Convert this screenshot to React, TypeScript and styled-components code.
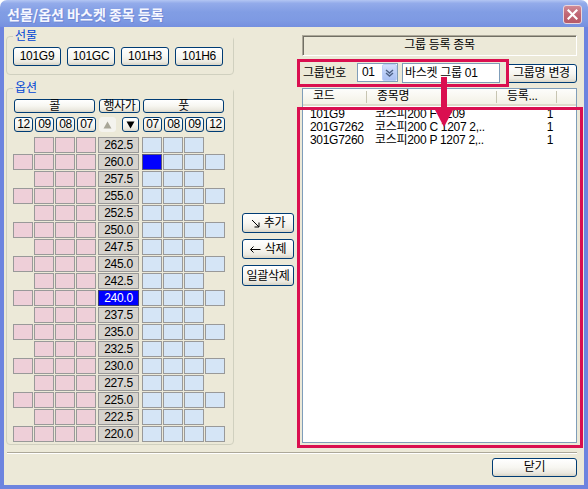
import React from "react";
import styled, { createGlobalStyle, css } from "styled-components";

const Global = createGlobalStyle`
  html, body { margin: 0; padding: 0; background: #ffffff; }
  body {
    font-family: "Liberation Sans", "Noto Sans CJK KR", sans-serif;
    font-size: 12px;
    letter-spacing: -0.3px;
    color: #000;
  }
  * { box-sizing: border-box; }
`;

const RED = "#da0f50";

const Window = styled.div`
  width: 588px;
  height: 489px;
  display: flex;
  flex-direction: column;
`;

const TitleBar = styled.div`
  height: 27px;
  flex: none;
  border-radius: 7px 7px 0 0;
  background: linear-gradient(
    180deg,
    #b3c6f3 0%,
    #93abea 12%,
    #819de4 45%,
    #7e9ae3 75%,
    #7590df 100%
  );
  display: flex;
  align-items: center;
  justify-content: space-between;
  padding: 0 6px 0 7px;
`;

const TitleText = styled.span`
  font-family: "Noto Sans CJK KR", sans-serif;
  font-weight: 700;
  font-size: 14px;
  letter-spacing: 0;
  color: #f6f7ff;
  text-shadow: 1px 1px 0 #7088d4;
  line-height: 18px;
`;

const CloseBox = styled.div`
  width: 19px;
  height: 19px;
  margin-top: 1px;
  border: 1px solid #e9d6dc;
  border-radius: 3px;
  background: linear-gradient(180deg, #d08a96 0%, #c06673 50%, #b65a68 100%);
  display: flex;
  align-items: center;
  justify-content: center;
`;

const Frame = styled.div`
  flex: 1;
  display: flex;
  border-style: solid;
  border-color: #6d84df;
  border-width: 0 4px 4px 4px;
`;

const Client = styled.div`
  flex: 1;
  position: relative;
  background: #ece9d8;
  display: flex;
  flex-direction: column;
`;

const Main = styled.div`
  height: 423px;
  display: flex;
  padding-left: 2px;
`;

const LeftColumn = styled.div`
  width: 228px;
  padding-top: 2px;
  display: flex;
  flex-direction: column;
`;

const GroupBox = styled.div<{ $height: number; $gap: number }>`
  margin-top: ${(p) => p.$gap}px;
  height: ${(p) => p.$height}px;
  border: 1px solid #d0d0bf;
  border-radius: 4px;
  display: flex;
  flex-direction: column;
`;

const GroupLegend = styled.div`
  display: table;
  margin: -8px 0 0 6px;
  padding: 0 2px;
  background: #ece9d8;
  color: #0046d5;
  line-height: 14px;
  height: 14px;
  letter-spacing: 0;
`;

const xpButton = css`
  border: 1px solid #003c74;
  border-radius: 3px;
  background: linear-gradient(
    180deg,
    #ffffff 0%,
    #f7f6f1 50%,
    #ebe9e0 82%,
    #d8d4c6 100%
  );
  color: #000;
  font-family: inherit;
  font-size: 12px;
  letter-spacing: inherit;
  padding: 0;
  margin: 0;
  text-align: center;
  white-space: nowrap;
  cursor: default;
`;

const FutureRow = styled.div`
  display: flex;
  gap: 6px;
  padding: 4px 0 0 6px;
`;

const FutureButton = styled.button`
  ${xpButton};
  width: 48px;
  height: 19px;
  line-height: 17px;
`;

const OptionArea = styled.div`
  padding: 4px 0 0 6px;
`;

const optionColumns = css`
  display: grid;
  grid-template-columns: repeat(4, 20px) 44px repeat(4, 20px);
  column-gap: 1px;
`;

const HeaderRow = styled.div`
  ${optionColumns};
  height: 14px;
  margin-bottom: 4px;
`;

const SideHeader = styled.button<{ $side: "call" | "put" }>`
  ${xpButton};
  grid-column: ${(p) => (p.$side === "call" ? "1 / 5" : "6 / 10")};
  margin: 0 1px;
  height: 14px;
  line-height: 12px;
`;

const StrikeHeader = styled.button`
  ${xpButton};
  grid-column: 5;
  margin: 0 1px 0 2px;
  height: 14px;
  line-height: 12px;
`;

const MonthRow = styled.div`
  ${optionColumns};
  height: 15px;
  margin-bottom: 5px;
`;

const MonthButton = styled.button`
  ${xpButton};
  margin-left: 1px;
  height: 15px;
  line-height: 13px;
`;

const ArrowPair = styled.div`
  display: flex;
  justify-content: space-between;
  padding: 0 2px;
`;

const ScrollArrow = styled.button<{ $disabled?: boolean }>`
  ${xpButton};
  width: 17px;
  height: 15px;
  display: flex;
  align-items: center;
  justify-content: center;
  ${(p) =>
    p.$disabled &&
    css`
      border-color: #f4f3ee;
      background: #f4f3ee;
    `}
`;

const StrikeGrid = styled.div`
  ${optionColumns};
  grid-auto-rows: 16px;
  row-gap: 1px;
`;

const OptionCell = styled.div<{ $side: "call" | "put"; $picked?: boolean }>`
  border: 1px solid #999999;
  background: ${(p) =>
    p.$picked ? "#0000ff" : p.$side === "call" ? "#eecfd8" : "#d5e5f6"};
  ${(p) => p.$picked && "border-color: #5a5a7a;"}
`;

const EmptyCell = styled.div``;

const StrikeCell = styled.div<{ $active?: boolean }>`
  margin: 0 2px 0 1px;
  border: 1px solid ${(p) => (p.$active ? "#3a3a6a" : "#999999")};
  background: ${(p) => (p.$active ? "#0000ff" : "#d6d3ce")};
  color: ${(p) => (p.$active ? "#ffffff" : "#000000")};
  text-align: center;
  line-height: 14px;
`;

const MiddleColumn = styled.div`
  width: 52px;
  margin-left: 8px;
  padding-top: 186px;
  display: flex;
  flex-direction: column;
  gap: 6px;
`;

const ActionButton = styled.button<{ $tall?: boolean }>`
  ${xpButton};
  width: 52px;
  height: ${(p) => (p.$tall ? 21 : 20)}px;
  line-height: 18px;
  display: flex;
  align-items: center;
  justify-content: center;
  gap: 4px;
`;

const RightColumn = styled.div`
  width: 275px;
  margin-left: 8px;
  display: flex;
  flex-direction: column;
`;

const SectionTitle = styled.div`
  margin-top: 8px;
  height: 21px;
  border-style: solid;
  border-width: 1px;
  border-color: #aca899 #ffffff #ffffff #aca899;
  box-shadow: inset 1px 1px 0 #716f64;
  text-align: center;
  line-height: 19px;
`;

const GroupRow = styled.div`
  margin-top: 7px;
  height: 20px;
  display: flex;
  align-items: flex-start;
`;

const GroupLabel = styled.span`
  width: 55px;
  padding-left: 1px;
  line-height: 20px;
`;

const ComboBox = styled.div`
  width: 41px;
  height: 19px;
  border: 1px solid #7f9db9;
  background: #ffffff;
  display: flex;
  align-items: center;
  justify-content: space-between;
  padding-left: 4px;
  line-height: 17px;
`;

const ComboDrop = styled.span`
  width: 15px;
  height: 17px;
  border: 1px solid #bccff7;
  border-radius: 2px;
  background: linear-gradient(180deg, #d2dffc 0%, #b7cbf6 60%, #aac0f2 100%);
  display: flex;
  align-items: center;
  justify-content: center;
`;

const NameInput = styled.div`
  width: 98px;
  height: 20px;
  margin-left: 4px;
  border: 1px solid #7f9db9;
  background: #ffffff;
  padding-left: 2px;
  line-height: 18px;
`;

const RenameButton = styled.button`
  ${xpButton};
  width: 71px;
  height: 19px;
  margin-left: 6px;
  margin-top: 1px;
  line-height: 17px;
`;

const ListView = styled.div`
  margin-top: 5px;
  height: 355px;
  border: 1px solid #7f9db9;
  background: #ffffff;
  display: flex;
  flex-direction: column;
`;

const listColumns = css`
  display: grid;
  grid-template-columns: 64px 130px 60px 1fr;
`;

const ListHeader = styled.div`
  ${listColumns};
  height: 17px;
  background: linear-gradient(180deg, #fdfdfb 0%, #f3f1e6 100%);
  border-bottom: 2px solid #dedbcb;
  margin-bottom: 2px;
`;

const HeaderCell = styled.div<{ $divider?: boolean }>`
  padding-left: 10px;
  line-height: 15px;
  white-space: nowrap;
  ${(p) =>
    p.$divider &&
    css`
      background: linear-gradient(#c7c5b2, #c7c5b2) right 2px / 1px 12px no-repeat;
    `}
`;

const ListRow = styled.div`
  ${listColumns};
  height: 13px;
  line-height: 13px;
`;

const RowCell = styled.div<{ $align?: "left" | "right"; $pad?: number }>`
  overflow: hidden;
  white-space: nowrap;
  text-align: ${(p) => p.$align ?? "left"};
  padding-left: ${(p) => (p.$align === "right" ? 0 : p.$pad ?? 7)}px;
  padding-right: ${(p) => (p.$align === "right" ? 4 : 0)}px;
`;

const Footer = styled.div`
  display: flex;
  flex-direction: column;
  padding-top: 2px;
`;

const Separator = styled.div`
  margin: 0 7px 0 3px;
  border-top: 1px solid #aca899;
  border-bottom: 1px solid #ffffff;
`;

const FooterButtons = styled.div`
  display: flex;
  justify-content: flex-end;
  padding: 4px 7px 0 0;
`;

const CloseDialogButton = styled.button`
  ${xpButton};
  width: 85px;
  height: 19px;
  line-height: 17px;
`;

const Highlight = styled.div<{ $x: number; $y: number; $w: number; $h: number }>`
  position: absolute;
  left: ${(p) => p.$x}px;
  top: ${(p) => p.$y}px;
  width: ${(p) => p.$w}px;
  height: ${(p) => p.$h}px;
  border: 3px solid ${RED};
  pointer-events: none;
`;

const PointerArrow = styled.svg`
  position: absolute;
  left: 430px;
  top: 50px;
  pointer-events: none;
`;

const futures = ["101G9", "101GC", "101H3", "101H6"];
const callMonths = ["12", "09", "08", "07"];
const putMonths = ["07", "08", "09", "12"];

const strikes: string[] = Array.from({ length: 18 }, (_, i) =>
  (262.5 - i * 2.5).toFixed(1)
);

const listItems = [
  { code: "101G9", name: "코스피200 F 1209", count: "1" },
  { code: "201G7262", name: "코스피200 C 1207 2,..", count: "1" },
  { code: "301G7260", name: "코스피200 P 1207 2,..", count: "1" },
];

function StrikeRow({ strike }: { strike: string }) {
  const half = strike.endsWith(".5");
  return (
    <>
      {[0, 1, 2, 3].map((i) =>
        half && i === 0 ? (
          <EmptyCell key={`c${i}`} />
        ) : (
          <OptionCell key={`c${i}`} $side="call" />
        )
      )}
      <StrikeCell $active={strike === "240.0"}>{strike}</StrikeCell>
      {[0, 1, 2, 3].map((i) =>
        half && i === 3 ? (
          <EmptyCell key={`p${i}`} />
        ) : (
          <OptionCell
            key={`p${i}`}
            $side="put"
            $picked={strike === "260.0" && i === 0}
          />
        )
      )}
    </>
  );
}

export default function App() {
  return (
    <>
      <Global />
      <Window>
        <TitleBar>
          <TitleText>선물/옵션 바스켓 종목 등록</TitleText>
          <CloseBox>
            <svg width="11" height="11" viewBox="0 0 11 11">
              <path
                d="M1.5 1.5 L9.5 9.5 M9.5 1.5 L1.5 9.5"
                stroke="#ffffff"
                strokeWidth="2.2"
                strokeLinecap="square"
              />
            </svg>
          </CloseBox>
        </TitleBar>
        <Frame>
          <Client>
            <Main>
              <LeftColumn>
                <GroupBox $height={39} $gap={7}>
                  <GroupLegend>선물</GroupLegend>
                  <FutureRow>
                    {futures.map((f) => (
                      <FutureButton key={f}>{f}</FutureButton>
                    ))}
                  </FutureRow>
                </GroupBox>
                <GroupBox $height={357} $gap={13}>
                  <GroupLegend>옵션</GroupLegend>
                  <OptionArea>
                    <HeaderRow>
                      <SideHeader $side="call">콜</SideHeader>
                      <StrikeHeader>행사가</StrikeHeader>
                      <SideHeader $side="put">풋</SideHeader>
                    </HeaderRow>
                    <MonthRow>
                      {callMonths.map((m) => (
                        <MonthButton key={`cm${m}`}>{m}</MonthButton>
                      ))}
                      <ArrowPair>
                        <ScrollArrow $disabled>
                          <svg width="9" height="8" viewBox="0 0 9 8">
                            <path d="M4.5 0.5 L8.5 7.5 L0.5 7.5 Z" fill="#a8a698" />
                          </svg>
                        </ScrollArrow>
                        <ScrollArrow>
                          <svg width="9" height="8" viewBox="0 0 9 8">
                            <path d="M0.5 0.5 L8.5 0.5 L4.5 7.5 Z" fill="#000000" />
                          </svg>
                        </ScrollArrow>
                      </ArrowPair>
                      {putMonths.map((m) => (
                        <MonthButton key={`pm${m}`}>{m}</MonthButton>
                      ))}
                    </MonthRow>
                    <StrikeGrid>
                      {strikes.map((s) => (
                        <StrikeRow key={s} strike={s} />
                      ))}
                    </StrikeGrid>
                  </OptionArea>
                </GroupBox>
              </LeftColumn>
              <MiddleColumn>
                <ActionButton>
                  <svg width="9" height="9" viewBox="0 0 9 9">
                    <path
                      d="M1 1 L8 8 M3.5 8 L8 8 L8 3.5"
                      stroke="#000"
                      strokeWidth="1"
                      fill="none"
                    />
                  </svg>
                  <span>추가</span>
                </ActionButton>
                <ActionButton>
                  <svg width="11" height="7" viewBox="0 0 11 7">
                    <path
                      d="M0.5 3.5 L10.5 3.5 M3.5 0.5 L0.5 3.5 L3.5 6.5"
                      stroke="#000"
                      strokeWidth="1"
                      fill="none"
                    />
                  </svg>
                  <span>삭제</span>
                </ActionButton>
                <ActionButton $tall>일괄삭제</ActionButton>
              </MiddleColumn>
              <RightColumn>
                <SectionTitle>그룹 등록 종목</SectionTitle>
                <GroupRow>
                  <GroupLabel>그룹번호</GroupLabel>
                  <ComboBox>
                    <span>01</span>
                    <ComboDrop>
                      <svg width="9" height="8" viewBox="0 0 9 8">
                        <path
                          d="M1 1 L4.5 4 L8 1 M1 4 L4.5 7 L8 4"
                          stroke="#4d6185"
                          strokeWidth="1.4"
                          fill="none"
                        />
                      </svg>
                    </ComboDrop>
                  </ComboBox>
                  <NameInput>바스켓 그룹 01</NameInput>
                  <RenameButton>그룹명 변경</RenameButton>
                </GroupRow>
                <ListView>
                  <ListHeader>
                    <HeaderCell $divider>코드</HeaderCell>
                    <HeaderCell $divider>종목명</HeaderCell>
                    <HeaderCell $divider>등록...</HeaderCell>
                    <HeaderCell />
                  </ListHeader>
                  {listItems.map((it) => (
                    <ListRow key={it.code}>
                      <RowCell $pad={7}>{it.code}</RowCell>
                      <RowCell $pad={8}>{it.name}</RowCell>
                      <RowCell $align="right">{it.count}</RowCell>
                      <RowCell />
                    </ListRow>
                  ))}
                </ListView>
              </RightColumn>
            </Main>
            <Footer>
              <Separator />
              <FooterButtons>
                <CloseDialogButton>닫기</CloseDialogButton>
              </FooterButtons>
            </Footer>
            <Highlight $x={293} $y={32} $w={212} $h={28} />
            <Highlight $x={293} $y={80} $w={286} $h={341} />
            <PointerArrow width="20" height="51" viewBox="0 0 20 51">
              <rect x="7" y="0" width="6" height="33" fill={RED} />
              <path d="M0 31 L20 31 L10 50 Z" fill={RED} />
            </PointerArrow>
          </Client>
        </Frame>
      </Window>
    </>
  );
}
